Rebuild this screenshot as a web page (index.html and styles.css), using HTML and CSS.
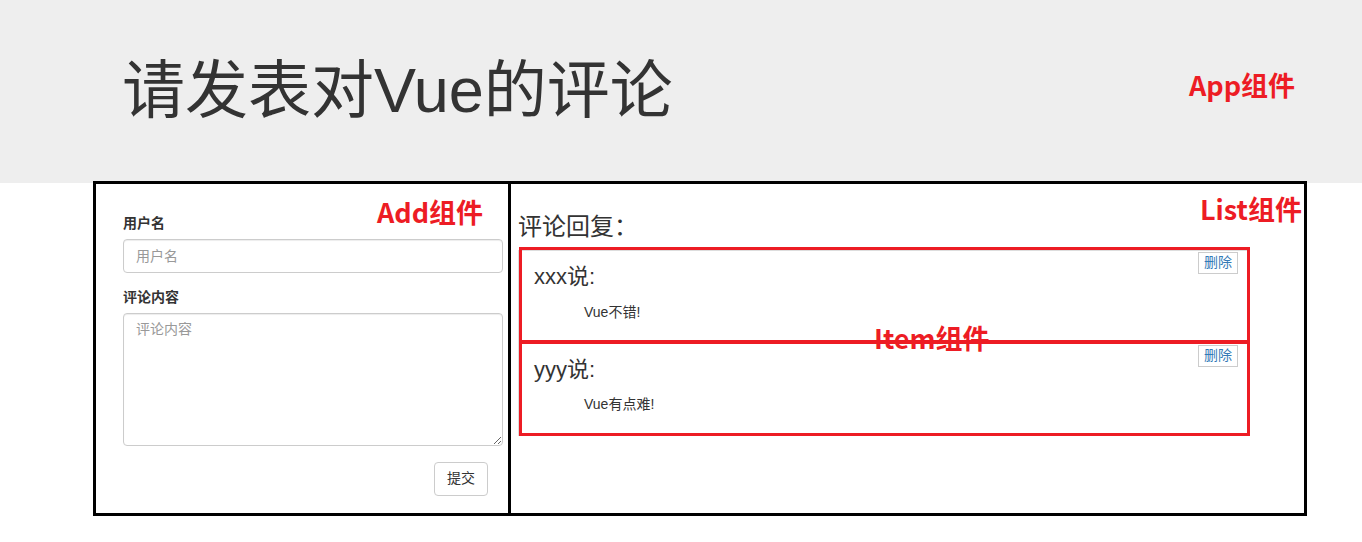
FILE: index.html
```html
<!DOCTYPE html>
<html lang="zh-CN">
<head>
<meta charset="utf-8">
<title>Vue 评论</title>
<link rel="stylesheet" href="styles.css">
</head>
<body>
<header class="jumbotron">
  <h1 class="title">请发表对Vue的评论</h1>
  <span class="note note-app">App组件</span>
</header>
<div class="board">
  <section class="add">
    <form class="form">
      <div class="form-group">
        <label class="label">用户名</label>
        <input class="control" type="text" placeholder="用户名">
      </div>
      <div class="form-group">
        <label class="label">评论内容</label>
        <textarea class="control area" placeholder="评论内容"></textarea>
      </div>
      <div class="actions">
        <button type="button" class="btn">提交</button>
      </div>
    </form>
  </section>
  <section class="list">
    <h3 class="reply">评论回复：</h3>
    <ul class="list-group">
      <li class="item">
        <div class="handle"><a class="handle-link" href="#">删除</a></div>
        <p class="user"><span>xxx</span><span>说:</span></p>
        <p class="centence">Vue不错!</p>
      </li>
      <li class="item">
        <div class="handle"><a class="handle-link" href="#">删除</a></div>
        <p class="user"><span>yyy</span><span>说:</span></p>
        <p class="centence">Vue有点难!</p>
      </li>
    </ul>
  </section>
  <span class="note note-add">Add组件</span>
  <span class="note note-list">List组件</span>
  <span class="note note-item">Item组件</span>
</div>
</body>
</html>
```
FILE: styles.css
```css
* {
  box-sizing: border-box;
}
html, body {
  margin: 0;
  padding: 0;
  background: #fff;
}
body {
  font-family: "Liberation Sans", "Noto Sans CJK SC", sans-serif;
  font-size: 14px;
  line-height: 1.42857;
  color: #333;
}
.jumbotron {
  position: relative;
  background: #eee;
  height: 183px;
  padding: 56px 0 0 122px;
}
.title {
  margin: 0;
  font-size: 63px;
  font-weight: 400;
  line-height: 1.1;
}
.note {
  position: absolute;
  font-family: "Noto Sans CJK SC", sans-serif;
  font-weight: 700;
  font-size: 27px;
  line-height: 1;
  color: #ed1c24;
  white-space: nowrap;
  z-index: 5;
}
.note-app { left: 1189px; top: 71px; }
.note-add { left: 281px; top: 14px; }
.note-list { left: 1104px; top: 11px; }
.note-item { left: 778px; top: 140px; }

.board {
  position: relative;
  display: flex;
  margin: -2px 0 0 93px;
  width: 1214px;
  height: 335px;
  border: 3px solid #000;
  background: #fff;
}
.add {
  width: 415px;
  flex: none;
  border-right: 3px solid #000;
  padding: 30px 5px 0 27px;
}
.form-group {
  margin-bottom: 15px;
}
.label {
  display: block;
  font-weight: 700;
  margin-bottom: 5px;
}
.control {
  display: block;
  width: 100%;
  height: 34px;
  padding: 6px 12px;
  font-family: inherit;
  font-size: 14px;
  line-height: 1.42857;
  color: #555;
  background: #fff;
  border: 1px solid #ccc;
  border-radius: 4px;
  box-shadow: inset 0 1px 1px rgba(0,0,0,.075);
}
.control::placeholder {
  color: #999;
}
.area {
  height: 133px;
  resize: vertical;
}
.actions {
  display: flex;
  justify-content: flex-end;
  padding-right: 15px;
  margin-top: 16px;
}
.btn {
  height: 34px;
  padding: 6px 12px;
  font-family: inherit;
  font-size: 14px;
  line-height: 1.42857;
  color: #333;
  background: #fff;
  border: 1px solid #ccc;
  border-radius: 4px;
}
.list {
  flex: 1;
  padding: 30px 0 0 7px;
}
.reply {
  margin: 0 0 10px;
  font-size: 24px;
  font-weight: 400;
  line-height: 1.1;
}
.list-group {
  list-style: none;
  margin: 0;
  padding: 0;
  width: 731px;
}
.item {
  position: relative;
  padding: 10px 15px;
  margin-bottom: -1px;
  border: 1px solid #ddd;
  background: #fff;
}
.item::after {
  content: "";
  position: absolute;
  left: 0;
  right: -2px;
  top: -4px;
  bottom: -1px;
  border: 3px solid #ed1c24;
  z-index: 3;
}
.handle {
  position: absolute;
  right: 10px;
  top: 1px;
  width: 40px;
  border: 1px solid #ccc;
  background: #fff;
  text-align: center;
}
.handle-link {
  display: block;
  color: #337ab7;
  text-decoration: none;
}
.user {
  margin: 0 0 10px;
  font-size: 22px;
}
.centence {
  margin: 0 0 10px;
  padding: 0 50px;
}
```
